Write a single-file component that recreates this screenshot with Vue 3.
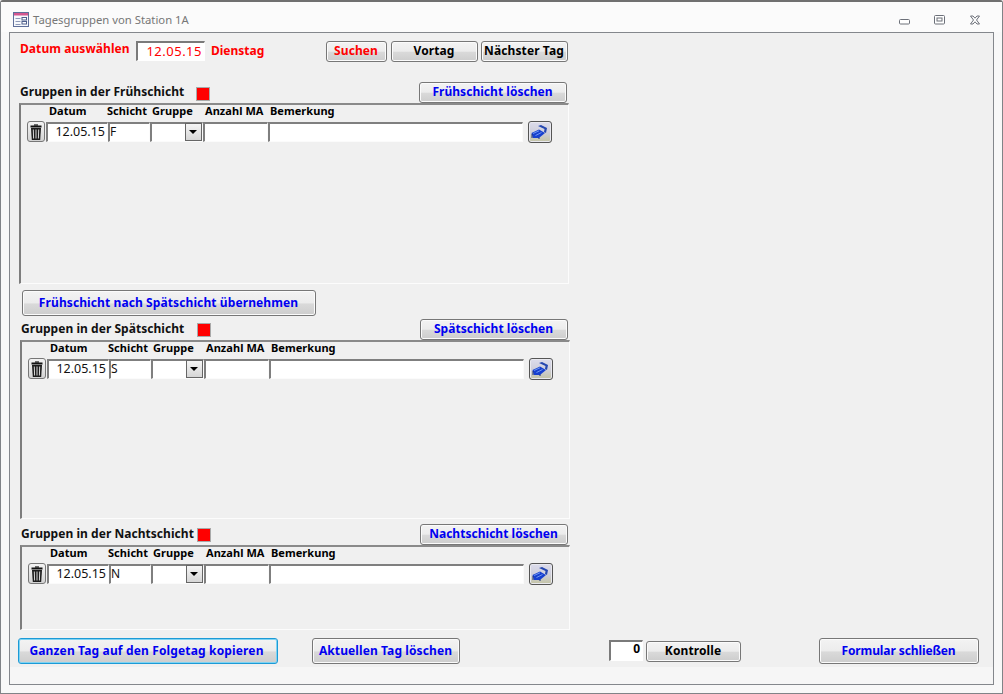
<script setup>
const sections = [
  { key: 'f', label: 'Gruppen in der Frühschicht', action: 'Frühschicht löschen', shift: 'F' },
  { key: 's', label: 'Gruppen in der Spätschicht', action: 'Spätschicht löschen', shift: 'S' },
  { key: 'n', label: 'Gruppen in der Nachtschicht', action: 'Nachtschicht löschen', shift: 'N' }
]
</script>

<template>
  <div class="window">
    <header class="titlebar">
      <svg class="app-icon" width="16" height="15" viewBox="0 0 16 15">
        <rect x="0.5" y="0.5" width="15" height="14" fill="#f6f8fc" stroke="#5f6f9a" />
        <rect x="1" y="1" width="14" height="2.5" fill="#d4578f" />
        <path d="M2.5 6.5h5M2.5 9.5h5M2.5 12.5h5" stroke="#8e9ab8" fill="none" />
        <rect x="9" y="5.5" width="4.5" height="2.5" fill="#fff" stroke="#4e5f8c" />
        <rect x="9" y="9.5" width="4.5" height="2.5" fill="#fff" stroke="#4e5f8c" />
      </svg>
      <span class="title">Tagesgruppen von Station 1A</span>
      <div class="controls">
        <svg width="11" height="6" viewBox="0 0 11 6"><rect x="0.5" y="0.5" width="10" height="4.5" rx="1" fill="#fff" stroke="#6c7079" /></svg>
        <svg width="11" height="10" viewBox="0 0 11 10"><rect x="0.5" y="0.5" width="10" height="8.5" rx="1" fill="#fff" stroke="#6c7079" /><rect x="3" y="3" width="5" height="3" fill="#fff" stroke="#6c7079" /></svg>
        <svg width="12" height="10" viewBox="0 0 12 10"><path d="M1.5 1 4 1 6 3.2 8 1 10.5 1 7.5 5 10.5 9 8 9 6 6.8 4 9 1.5 9 4.5 5Z" fill="#fff" stroke="#6c7079" /></svg>
      </div>
    </header>

    <main class="client">
      <div class="form">
        <div class="date-row">
          <label class="date-label">Datum auswählen</label>
          <div class="date-input">12.05.15</div>
          <span class="weekday">Dienstag</span>
          <button class="btn btn-search">Suchen</button>
          <button class="btn btn-prev">Vortag</button>
          <button class="btn btn-next">Nächster Tag</button>
        </div>

        <template v-for="s in sections" :key="s.key">
          <section class="section" :class="'section-' + s.key">
            <div class="section-head">
              <span class="section-label">{{ s.label }}</span>
              <span class="swatch"></span>
              <button class="btn btn-blue btn-clear">{{ s.action }}</button>
            </div>
            <div class="subform">
              <div class="grid grid-head">
                <span></span>
                <span class="h-date">Datum</span>
                <span class="h-shift">Schicht</span>
                <span class="h-plain">Gruppe</span>
                <span class="h-plain">Anzahl MA</span>
                <span class="h-plain">Bemerkung</span>
              </div>
              <div class="grid grid-row">
                <button class="icon-btn trash">
                  <svg width="12" height="16" viewBox="0 0 12 16">
                    <path d="M4 1h4" stroke="#111" stroke-width="1.2" fill="none" />
                    <path d="M0.5 2.5h11" stroke="#111" stroke-width="2" fill="none" />
                    <path d="M1 4h10l-.8 12H1.8Z" fill="#1c1c1c" />
                    <path d="M3.3 5.5 3.6 14.5M6 5.5V14.5M8.7 5.5 8.4 14.5" stroke="#d8d8d8" stroke-width="1" fill="none" />
                  </svg>
                </button>
                <div class="field field-date">12.05.15</div>
                <div class="field">{{ s.shift }}</div>
                <div class="field field-combo"><span class="combo-arrow"></span></div>
                <div class="field"></div>
                <div class="field"></div>
                <button class="icon-btn nav">
                  <svg width="18" height="14" viewBox="0 0 18 14">
                    <path d="M0.5 8 8 4.5 14 8 8 13 2 13Z" fill="#1740d0" />
                    <path d="M2 8.5 8 5.8M4.5 10.5 10.5 7.5" stroke="#6f96f0" fill="none" />
                    <path d="M7 1 10 0 16 3 15 8 13 7 13.5 4Z" fill="#2547b0" />
                    <path d="M1 9V13M8 12.5V14" stroke="#1b2f78" fill="none" />
                  </svg>
                </button>
              </div>
            </div>
          </section>
          <button v-if="s.key === 'f'" class="btn btn-blue btn-copy-shift">Frühschicht nach Spätschicht übernehmen</button>
        </template>

        <div class="bottom-row">
          <button class="btn btn-blue btn-day btn-focus">Ganzen Tag auf den Folgetag kopieren</button>
          <button class="btn btn-blue btn-today">Aktuellen Tag löschen</button>
          <div class="count">0</div>
          <button class="btn btn-check">Kontrolle</button>
          <button class="btn btn-blue btn-close">Formular schließen</button>
        </div>
      </div>
    </main>
  </div>
</template>

<style>
html, body { margin: 0; background: #f7f7f7; }
</style>

<style scoped>
.window {
  width: 1003px;
  height: 694px;
  box-sizing: border-box;
  display: flex;
  flex-direction: column;
  background: #f8f8f8;
  border: 1px solid #808387;
  border-top: 2px solid #707070;
  border-radius: 3px 3px 0 0;
  font-family: "Noto Sans", "DejaVu Sans", sans-serif;
  font-size: 12px;
  font-weight: 700;
  color: #000;
}
.titlebar {
  height: 30px;
  flex: none;
  display: flex;
  align-items: center;
  padding-left: 12px;
  background: #fbfbfb;
}
.app-icon { flex: none; margin-top: 5px; }
.title {
  margin-left: 4px;
  margin-top: 5px;
  font-size: 11.3px;
  font-weight: 400;
  color: #777;
}
.controls {
  margin-left: auto;
  display: flex;
  align-items: flex-end;
  width: 103px;
  gap: 24px;
  margin-top: 6px;
}
.client {
  margin: 0 8px 8px;
  flex: 1;
  min-height: 0;
  border: 1px solid #84878c;
  background: #f6f6f6;
}
.form {
  height: 634px;
  box-sizing: border-box;
  padding: 8px 0 0 8px;
  background: #f0f0f0;
}
.date-row {
  display: flex;
  height: 21px;
  align-items: flex-start;
  margin-left: 2px;
  color: #f00;
}
.date-label { width: 116px; line-height: 16px; letter-spacing: 0.07px; }
.date-input {
  width: 69px;
  height: 20px;
  box-sizing: border-box;
  border: 1px solid #fff;
  border-top: 2px solid #7a7a7a;
  border-left: 2px solid #7a7a7a;
  background: #fff;
  text-align: right;
  padding-right: 2px;
  line-height: 16px;
  font-size: 13px;
  font-weight: 400;
  letter-spacing: 0.5px;
  color: #f00;
}
.weekday { width: 115px; margin-left: 6px; line-height: 19px; }
.btn {
  box-sizing: border-box;
  height: 21px;
  padding: 0 1px 2px 0;
  border: 1px solid #777;
  border-radius: 3px;
  background: linear-gradient(#f3f3f3 0, #ececec 48%, #d9d9d9 55%, #cdcdcd 100%);
  box-shadow: inset 0 0 0 1px #fbfbfb;
  font: inherit;
  letter-spacing: 0.1px;
  color: #000;
  text-align: center;
  white-space: nowrap;
}
.btn-blue { color: #0000f0; }
.btn-search { width: 61px; color: #f00; }
.btn-prev { width: 87px; margin-left: 4px; }
.btn-next { width: 87px; margin-left: 3px; }
.section { width: 550px; margin-left: 2px; }
.section-f { margin-left: 1px; margin-top: 20px; }
.section-s { margin-top: 3px; }
.section-n { margin-top: 5px; }
.section-head {
  height: 21px;
  display: flex;
  align-items: center;
  padding-left: 1px;
}
.section-label { width: 176px; color: #111; white-space: nowrap; margin-top: -3px; letter-spacing: 0.04px; }
.swatch {
  width: 14px;
  height: 14px;
  box-sizing: border-box;
  background: #f00;
  border: 1px solid #a9a9a9;
}
.section-f .swatch { margin-top: 2px; }
.btn-clear { width: 148px; margin-left: 209px; letter-spacing: 0.03px; }
.subform {
  box-sizing: border-box;
  border-top: 2px solid #8a8a8a;
  border-left: 2px solid #7d7d7d;
  border-right: 1px solid #fcfcfc;
  border-bottom: 1px solid #fcfcfc;
  padding-left: 5px;
}
.section-f .subform { height: 181px; }
.section-s .subform { height: 179px; }
.section-n .subform { height: 85px; }
.grid {
  display: grid;
  grid-template-columns: 20px 62px 42px 53px 65px 255px 24px;
}
.grid-head {
  height: 14px;
  padding-left: 1px;
  font-size: 11px;
  line-height: 11px;
  letter-spacing: 0.05px;
  white-space: nowrap;
}
.h-date { padding-left: 2px; }
.h-shift { margin-left: -2px; }
.h-plain { padding-left: 1px; }
.grid-row { margin-top: 2px; height: 21px; align-items: start; }
.field {
  box-sizing: border-box;
  height: 20px;
  border: 1px solid #fbfbfb;
  border-top: 2px solid #7f7f7f;
  border-left: 2px solid #7f7f7f;
  margin-top: 1px;
  background: #fff;
  font-weight: 400;
  font-size: 12px;
  line-height: 15px;
  color: #111;
  position: relative;
}
.field-date { text-align: right; padding-right: 2px; font-size: 12.5px; }
.combo-arrow {
  position: absolute;
  right: 0;
  top: -1px;
  width: 17px;
  height: 18px;
  box-sizing: border-box;
  border: 1px solid #666;
  background: linear-gradient(#f5f5f5, #d6d6d6);
}
.combo-arrow::after {
  content: "";
  position: absolute;
  left: 3px;
  top: 6px;
  border: 4px solid transparent;
  border-top: 4px solid #000;
  border-bottom: 0;
}
.icon-btn {
  box-sizing: border-box;
  padding: 0;
  display: flex;
  align-items: center;
  justify-content: center;
  border: 1px solid #777;
  border-radius: 3px;
  height: 21px;
}
.trash {
  width: 18px;
  margin-left: 1px;
  background: linear-gradient(#f3f3f3, #e2e2e2 55%, #d2d2d2);
}
.nav {
  width: 24px;
  height: 22px;
  margin-left: 5px;
  border-color: #555;
  box-shadow: inset 0 0 0 1px #e9e9ef;
  background: linear-gradient(#dcdcec, #cfcfdc 50%, #c4c4a4);
}
.btn-copy-shift { display: block; width: 294px; height: 26px; margin: 6px 0 0 4px; }
.bottom-row { display: flex; align-items: flex-start; margin-top: 8px; }
.btn-day { width: 260px; height: 26px; letter-spacing: 0.15px; padding-right: 3px; }
.btn-focus {
  border: 1px solid #1c9ad6;
  box-shadow: inset 0 0 0 1px #7fd3f2;
}
.btn-today { width: 148px; height: 26px; margin-left: 34px; }
.count {
  width: 34px;
  height: 21px;
  margin-left: 149px;
  margin-top: 2px;
  box-sizing: border-box;
  border: 1px solid #fff;
  border-top: 2px solid #7a7a7a;
  border-left: 2px solid #7a7a7a;
  background: #fff;
  text-align: right;
  line-height: 14px;
  padding-right: 2px;
}
.btn-check { width: 95px; margin-left: 3px; margin-top: 3px; }
.btn-close { width: 160px; height: 26px; margin-left: 78px; letter-spacing: -0.1px; }
</style>
